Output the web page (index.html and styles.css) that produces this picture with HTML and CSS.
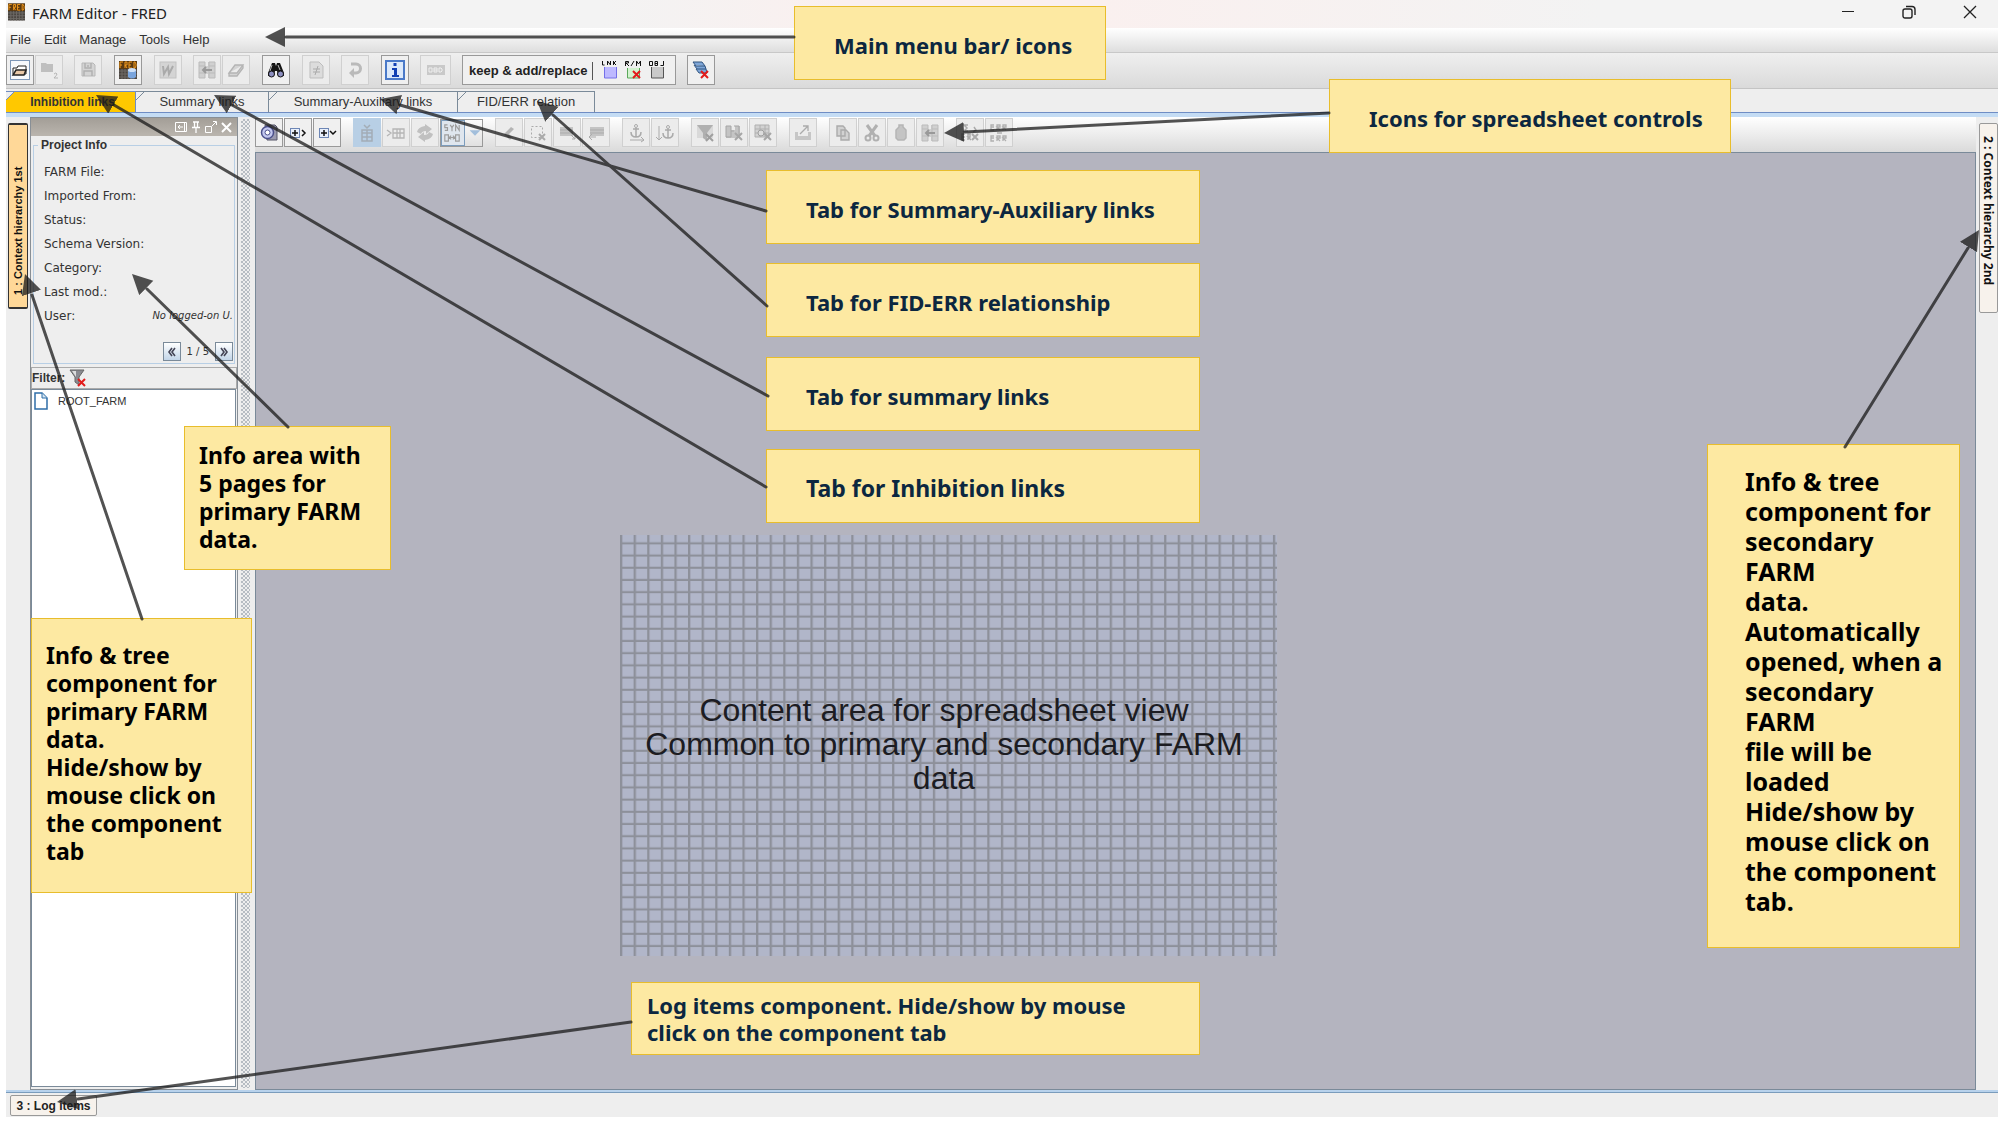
FILE: index.html
```html
<!DOCTYPE html>
<html lang="en">
<head>
<meta charset="utf-8">
<title>FARM Editor - FRED</title>
<link rel="stylesheet" href="styles.css">
</head>
<body>
<svg class="defs" aria-hidden="true">
  <defs>
    <symbol id="i-fred" viewBox="0 0 18 18"><rect width="18" height="18" fill="#4a4540"/><path d="M0 10h18M0 13h18M0 16h18M3 8v10M6 8v10M9 8v10M12 8v10M15 8v10" stroke="#6e6a66"/><rect width="18" height="8" fill="#5c3a10"/><path d="M1 7V1h3M1 4h2M6 7V1h2v3H6l2 3M13 1h-3v6h3M10 4h2M15 1v6h1l1-2V3l-1-2z" stroke="#f39a1d" fill="none"/></symbol>
    <symbol id="i-merge" viewBox="0 0 18 18"><path d="M1 1h6v4h3V1h7v16h-7v-4H7v4H1z" fill="#d0d0d0"/><path d="M1 1h6v16H1zM11 1h6v16h-6zM1 5h6M1 12h6M11 5h6M11 12h6" stroke="#bbb" fill="none"/><path d="M14 9H5M8 6L5 9l3 3" stroke="#999" stroke-width="2" fill="none"/></symbol>
    <symbol id="i-anchor" viewBox="0 0 12 14"><circle cx="6" cy="2" r="1.5" fill="none" stroke="#aaa"/><path d="M6 4v9M3 5h6M1 8q0 5 5 5t5-5" stroke="#aaa" stroke-width="1.5" fill="none"/></symbol>
  </defs>
</svg>

<div class="window">
  <header class="titlebar">
    <svg class="app-icon"><use href="#i-fred"/></svg>
    <h1 class="title">FARM Editor - FRED</h1>
    <div class="window-controls">
      <button type="button" aria-label="Minimize"><svg width="14" height="14"><path d="M1 6.5h12" stroke="#222"/></svg></button>
      <button type="button" aria-label="Restore"><svg width="14" height="14" fill="none" stroke="#222" stroke-width="1.4"><rect x="1" y="4" width="9" height="9" rx="2"/><path d="M4 1.5h6q3 0 3 3V10"/></svg></button>
      <button type="button" aria-label="Close"><svg width="14" height="14"><path d="M1 1l12 12M13 1L1 13" stroke="#222" stroke-width="1.3"/></svg></button>
    </div>
  </header>

  <nav class="menubar" aria-label="Main menu">
    <button type="button">File</button>
    <button type="button">Edit</button>
    <button type="button">Manage</button>
    <button type="button">Tools</button>
    <button type="button">Help</button>
  </nav>

  <div class="toolbar toolbar-main" role="toolbar" aria-label="Main tools">
    <div class="group">
      <button type="button" class="tool on" aria-label="Open"><svg viewBox="0 0 20 20"><rect x=".5" y=".5" width="19" height="19" fill="#f6f9fd" stroke="#7d97b8"/><path d="M3 14V8h4l1-2h8v8z" fill="#fff" stroke="#222"/><path d="M3 15l3-5h10l-2 5z" fill="#e8c8a8" stroke="#222" stroke-width="1.5"/></svg></button>
      <button type="button" class="tool" aria-label="Open second"><svg viewBox="0 0 20 20"><path d="M2 3h5l1 1h6v8H2z" fill="#bfbfbf"/><path d="M15 14q2-2 3 0 0 1-3 4h4" stroke="#b5b5b5" fill="none"/></svg></button>
    </div>
    <span class="sep narrow"></span>
    <button type="button" class="tool" aria-label="Save"><svg viewBox="0 0 20 20"><path d="M4 3h11l2 2v11H4z" fill="#d4d4d4" stroke="#b8b8b8"/><path d="M7 3v5h6V3M6 16v-5h8v5M10 5v2" stroke="#b0b0b0" fill="none" stroke-width="1.4"/></svg></button>
    <span class="sep"></span>
    <button type="button" class="tool on" aria-label="FRED database"><svg viewBox="0 0 20 20"><use href="#i-fred" x="1" y="1" width="18" height="18"/><path d="M10 10v7q4 3 8 0v-7z" fill="#7aa5dd"/><ellipse cx="14" cy="10" rx="4" ry="2" fill="#cfe1f7"/></svg></button>
    <span class="sep"></span>
    <button type="button" class="tool" aria-label="Word export"><svg viewBox="0 0 20 20"><rect x="2" y="2" width="16" height="16" fill="#d4d4d4" stroke="#c2c2c2"/><path d="M5 6l1 8 4-7 1 7 4-8" stroke="#aaa" stroke-width="2" fill="none"/></svg></button>
    <span class="sep narrow"></span>
    <div class="group">
      <button type="button" class="tool" aria-label="Merge"><svg viewBox="0 0 20 20"><use href="#i-merge" x="1" y="1" width="18" height="18"/></svg></button>
      <button type="button" class="tool" aria-label="Erase"><svg viewBox="0 0 20 20"><path d="M3 13l6-8h8l-6 8zM3 13v3h8l6-8V5" fill="#d4d4d4" stroke="#b4b4b4" stroke-width="1.3"/></svg></button>
    </div>
    <span class="sep"></span>
    <button type="button" class="tool on" aria-label="Find"><svg viewBox="0 0 20 20"><path d="M6 3h3l1 3 1-3h3l4 10v3h-6l-1-5H9l-1 5H2v-3z" fill="#151515"/><circle cx="5.500" cy="14" r="3" fill="#8d8fc0" stroke="#111"/><circle cx="14.500" cy="14" r="3" fill="#8d8fc0" stroke="#111"/><path d="M6 5l-2 6M12 5l2 5" stroke="#bbb"/></svg></button>
    <span class="sep"></span>
    <button type="button" class="tool" aria-label="Compare"><svg viewBox="0 0 20 20"><path d="M4 2h9l4 4v12H4z" fill="#dcdcdc" stroke="#bdbdbd"/><path d="M7 9h7M7 12h7M12 6l-3 9" stroke="#aaa"/></svg></button>
    <span class="sep narrow"></span>
    <button type="button" class="tool" aria-label="Undo"><svg viewBox="0 0 20 20"><path d="M6 4h5a4 4 0 0 1 0 9H8" stroke="#bababa" stroke-width="3" fill="none"/><path d="M9 8l-5 5 5 5z" fill="#bababa"/></svg></button>
    <span class="sep"></span>
    <button type="button" class="tool on" aria-label="Information"><svg viewBox="0 0 20 20"><rect x="1" y="1" width="18" height="18" fill="#dce9fa" stroke="#4a79c8" stroke-width="2"/><path d="M8.500 3h3v3h-3zM7 8h5v7h2v2H7v-2h2v-5H7z" fill="#1240b4"/></svg></button>
    <span class="sep narrow"></span>
    <button type="button" class="tool wide" aria-label="OBD"><svg viewBox="0 0 20 20"><rect x="1" y="5" width="18" height="10" fill="#c9c9c9"/><path d="M3 8h3v4H3zM8 8h3v4H8zM8 10h3M13 8h2l1 1v2l-1 1h-2z" stroke="#efefef" fill="none"/></svg></button>
    <span class="sep narrow"></span>
    <div class="mode">
      <button type="button" class="mode-label">keep &amp; add/replace</button>
      <button type="button" class="mode-icon" aria-label="LNK"><svg viewBox="0 0 16 20"><path d="M1.500 1v4h2M6.500 5V1l3 4V1M12.500 1v4M15 1l-2 2 2 2" stroke="#111" fill="none"/><path d="M3.500 7v11h12V7" fill="#bdb9ff" stroke="#7470e8"/></svg></button>
      <button type="button" class="mode-icon" aria-label="R/M"><svg viewBox="0 0 16 20"><path d="M.5 6V1.500h3V3H1l3 3M6 6l3-5M11.500 6V1l2 3 2-3v5" stroke="#111" fill="none"/><path d="M2.500 8v10h12V8" fill="#d3f3cf" stroke="#5aa85a"/><path d="M8 11l7 7M15 11l-7 7" stroke="#e21b1b" stroke-width="2"/></svg></button>
      <button type="button" class="mode-icon" aria-label="OBJ"><svg viewBox="0 0 16 20"><path d="M.5 1.500h3v4h-3zM6 1.500h2.500v4H6zM6 3.500h3M14.500 1v4.500h-3" stroke="#111" fill="none"/><path d="M2.500 7v11h12V7" fill="#c9c9c9" stroke="#555"/></svg></button>
    </div>
    <span class="sep narrow"></span>
    <button type="button" class="tool on" aria-label="Clear layers"><svg viewBox="0 0 20 20"><path d="M2 2h9l3 4H5zM3 5l3 4h9l-1-3M5 9l3 4h8l-1-4" fill="#7ea6d8" stroke="#31547f"/><path d="M10 11l7 7M17 11l-7 7" stroke="#e21b1b" stroke-width="2"/></svg></button>
  </div>

  <div class="tabs" role="tablist">
    <button type="button" role="tab" class="tab active" aria-selected="true">Inhibition links</button>
    <button type="button" role="tab" class="tab tab-m">Summary links</button>
    <button type="button" role="tab" class="tab tab-l">Summary-Auxiliary links</button>
    <button type="button" role="tab" class="tab tab-s">FID/ERR relation</button>
  </div>

  <main class="workspace">
    <div class="strip strip-left"><button type="button" class="side-tab first">1 : Context hierarchy 1st</button></div>

    <aside class="panel">
      <div class="panel-head">
        <button type="button" aria-label="Dock"><svg width="12" height="12"><path d="M.5 1.500h11v9H.5zM9.500 2v8M8 6H3M5 4L3 6l2 2" stroke="#fff" fill="none"/></svg></button>
        <button type="button" aria-label="Pin"><svg width="12" height="12"><path d="M3 1h6M4.500 1v5M7.500 1v5M2 6.500h8M6 7v5" stroke="#fff" stroke-width="1.300" fill="none"/></svg></button>
        <button type="button" aria-label="Float"><svg width="12" height="12"><path d="M.5 5.500h6v6h-6zM7 5l4-4M8 .5h3.500V4" stroke="#fff" fill="none"/></svg></button>
        <button type="button" aria-label="Close"><svg width="12" height="12"><path d="M2 2l9 9M11 2l-9 9" stroke="#fff" stroke-width="2"/></svg></button>
      </div>
      <fieldset class="info">
        <legend>Project Info</legend>
        <dl>
          <div><dt>FARM File:</dt><dd></dd></div>
          <div><dt>Imported From:</dt><dd></dd></div>
          <div><dt>Status:</dt><dd></dd></div>
          <div><dt>Schema Version:</dt><dd></dd></div>
          <div><dt>Category:</dt><dd></dd></div>
          <div><dt>Last mod.:</dt><dd></dd></div>
          <div><dt>User:</dt><dd>No logged-on U.</dd></div>
        </dl>
        <div class="pager">
          <button type="button" aria-label="Previous page"><svg width="10" height="10"><path d="M5 1L2 5l3 4M8 1L5 5l3 4" stroke="#445" stroke-width="1.600" fill="none"/></svg></button>
          <span>1 / 5</span>
          <button type="button" aria-label="Next page"><svg width="10" height="10"><path d="M2 1l3 4-3 4M5 1l3 4-3 4" stroke="#445" stroke-width="1.600" fill="none"/></svg></button>
        </div>
      </fieldset>
      <div class="filter">
        <span>Filter:</span>
        <button type="button" aria-label="Clear filter"><svg width="17" height="18"><path d="M1 1h14l-5 7v8l-4-3V8z" fill="#8a8a90" stroke="#666"/><path d="M3 2h4v6z" fill="#ddd"/><path d="M9 10l7 7M16 10l-7 7" stroke="#e21b1b" stroke-width="2"/></svg></button>
      </div>
      <ul class="tree">
        <li><svg width="14" height="18"><path d="M1 1h7l5 5v11H1z" fill="#fff" stroke="#2f6ea8" stroke-width="1.500"/><path d="M8 1v5h5" fill="#d5e5f2" stroke="#2f6ea8"/></svg>ROOT_FARM</li>
      </ul>
    </aside>

    <div class="splitter"></div>

    <section class="editor">
      <div class="toolbar toolbar-sheet" role="toolbar" aria-label="Spreadsheet controls">
        <div class="group">
          <button type="button" class="tool on" aria-label="Settings"><svg viewBox="0 0 20 20"><path d="M6 2h10l2 2v13H8z" fill="#9a9ab0" stroke="#556"/><circle cx="8.500" cy="9.500" r="6" fill="#c3c8f0" stroke="#4a4f8a" stroke-width="1.500"/><circle cx="8.500" cy="9.500" r="2.500" fill="#fff" stroke="#4a4f8a"/></svg></button>
          <button type="button" class="tool on" aria-label="Expand columns"><svg viewBox="0 0 20 20"><rect x="2.500" y="5.500" width="9" height="9" fill="#e8effa" stroke="#6d86b5"/><path d="M4 10h6M7 7v6M14 7l3 3-3 3" stroke="#111" stroke-width="1.500" fill="none"/></svg></button>
          <button type="button" class="tool on" aria-label="Expand rows"><svg viewBox="0 0 20 20"><rect x="2.500" y="5.500" width="9" height="9" fill="#e8effa" stroke="#6d86b5"/><path d="M4 10h6M7 7v6M13 8l3 3 3-3" stroke="#111" stroke-width="1.500" fill="none"/></svg></button>
        </div>
        <span class="sep"></span>
        <div class="group">
          <button type="button" class="tool selected" aria-label="Column mode"><svg viewBox="0 0 20 20"><path d="M5 7h10v11H5zM5 10h10M5 14h10M10 7v11M7 2l3 3 3-3" stroke="#a3adb6" stroke-width="1.500" fill="none"/></svg></button>
          <button type="button" class="tool" aria-label="Row mode"><svg viewBox="0 0 20 20"><path d="M7 6h11v9H7zM7 10h11M11 6v9M14 6v9M1 7l4 3-4 3" stroke="#b5b5b5" stroke-width="1.300" fill="none"/></svg></button>
          <button type="button" class="tool" aria-label="Refresh"><svg viewBox="0 0 20 20"><path d="M10 3V1l7 5-6 5V8Q7 8 6 11L2 9q1-5 8-6zM10 17v2l-7-5 6-5v3q4 0 5-3l4 2q-1 5-8 6z" fill="#c0c0c0"/></svg></button>
          <span class="sync">
            <button type="button" aria-label="Synchronize"><svg viewBox="0 0 20 24"><path d="M5 3H2v3h3v3H2M8 3l2 3 2-3M10 6v4M14 10V3l4 6V3M2 14h4v7H2zM14 14h4v7h-4zM7 17h6M9 15l-2 2 2 2M11 15l2 2-2 2" stroke="#9d9d9d" stroke-width="1.300" fill="none"/></svg></button>
            <button type="button" aria-label="Synchronize options"><svg viewBox="0 0 20 24"><path d="M4 9h12l-6 6z" fill="#a2bedb"/></svg></button>
          </span>
        </div>
        <span class="sep"></span>
        <div class="group">
          <button type="button" class="tool" aria-label="Edit"><svg viewBox="0 0 20 20"><path d="M5 11l7-7 3 2-5 5 3 3-2 3z" fill="#b4b4b4"/></svg></button>
          <button type="button" class="tool" aria-label="Clear selection"><svg viewBox="0 0 20 20"><rect x="3.500" y="3.500" width="11" height="11" fill="none" stroke="#aaa" stroke-dasharray="2 2"/><path d="M11 11l6 6M17 11l-6 6" stroke="#aaa" stroke-width="2"/></svg></button>
          <button type="button" class="tool" aria-label="Insert row"><svg viewBox="0 0 20 20"><path d="M3 4h13v9H3z" fill="#c4c4c4"/><path d="M3 7h13M3 10h13M14 12l4 4M18 13v3h-3" stroke="#ababab" fill="none"/></svg></button>
          <button type="button" class="tool" aria-label="Remove row"><svg viewBox="0 0 20 20"><path d="M4 4h14v9H4z" fill="#c4c4c4"/><path d="M4 7h14M4 10h14M10 14H3M6 11l-3 3 3 3" stroke="#ababab" fill="none"/></svg></button>
        </div>
        <span class="sep"></span>
        <div class="group">
          <button type="button" class="tool" aria-label="Anchor column"><svg viewBox="0 0 20 20"><use href="#i-anchor" x="4" y="1" width="12" height="14"/><path d="M4 17h14M15 14l3 3-3 2" stroke="#aaa" fill="none"/></svg></button>
          <button type="button" class="tool" aria-label="Anchor row"><svg viewBox="0 0 20 20"><use href="#i-anchor" x="7" y="2" width="12" height="14"/><path d="M4 3v14M1 14l3 3 3-3" stroke="#aaa" fill="none"/></svg></button>
        </div>
        <span class="sep"></span>
        <div class="group">
          <button type="button" class="tool" aria-label="Clear filter"><svg viewBox="0 0 20 20"><path d="M2 2h16v13H2z" fill="#d9d9d9"/><path d="M2 2h16l-6 8v8l-4-3v-5z" fill="#b0b0b0"/><path d="M11 11l7 7M18 11l-7 7" stroke="#9f9f9f" stroke-width="2"/></svg></button>
          <button type="button" class="tool" aria-label="Clear search"><svg viewBox="0 0 20 20"><path d="M2 3h5v4h4V3h5v12H2z" fill="#c4c4c4"/><path d="M2 3h5v11H2zM10 3h5v9M7 8h3" stroke="#a6a6a6" fill="none"/><path d="M11 10l7 7M18 10l-7 7" stroke="#a6a6a6" stroke-width="2"/></svg></button>
          <button type="button" class="tool" aria-label="Clear grid search"><svg viewBox="0 0 20 20"><path d="M2 2h14v12H2zM2 6h14M2 10h14M7 2v12M12 2v12" fill="#d2d2d2" stroke="#b0b0b0"/><circle cx="8" cy="10" r="3" fill="#ddd" stroke="#a0a0a0"/><path d="M11 10l7 7M18 10l-7 7" stroke="#a6a6a6" stroke-width="2"/></svg></button>
        </div>
        <span class="sep"></span>
        <button type="button" class="tool" aria-label="Export"><svg viewBox="0 0 20 20"><path d="M2 9h3v4h10V9h3v8H2z" fill="#c6c6c6"/><path d="M7 11l8-8M10 3h5v5" stroke="#ababab" stroke-width="1.300" fill="none"/></svg></button>
        <span class="sep"></span>
        <div class="group">
          <button type="button" class="tool" aria-label="Copy"><svg viewBox="0 0 20 20"><path d="M4 3h6l2 2v8H4zM8 7h5l3 3v7H8z" fill="#d2d2d2" stroke="#ababab" stroke-width="1.400"/></svg></button>
          <button type="button" class="tool" aria-label="Cut"><svg viewBox="0 0 20 20"><path d="M5 2l8 11M15 2L7 13" stroke="#b0b0b0" stroke-width="3"/><circle cx="6" cy="15" r="2.500" fill="none" stroke="#b0b0b0" stroke-width="2"/><circle cx="14" cy="15" r="2.500" fill="none" stroke="#b0b0b0" stroke-width="2"/></svg></button>
          <button type="button" class="tool" aria-label="Paste"><svg viewBox="0 0 20 20"><path d="M8 2h4v2l3 3v8l-2 2H7l-2-2V7l3-3z" fill="#c4c4c4" stroke="#b5b5b5" stroke-width="1.500"/></svg></button>
          <button type="button" class="tool" aria-label="Merge rows"><svg viewBox="0 0 20 20"><use href="#i-merge" x="1" y="1" width="18" height="18"/></svg></button>
        </div>
        <span class="sep"></span>
        <div class="group">
          <button type="button" class="tool" aria-label="Clear errors"><svg viewBox="0 0 20 20"><path d="M8 2H4l3 3-3 3h4M14 4l2 3-3 2M5 11H2v6h3M2 14h3M8 17v-6h2v3H8l3 3" stroke="#aaa" stroke-width="1.500" fill="none"/><path d="M12 11l6 6M18 11l-6 6" stroke="#aaa" stroke-width="2"/></svg></button>
          <button type="button" class="tool" aria-label="Errors"><svg viewBox="0 0 20 20"><path d="M5 2H2v5h3M2 4h3M8 7V2h3v2H8l3 3M14 7V2h3v2h-3l3 3M5 13H2v5h3M2 15h3M8 18v-5h3v2H8l3 3M14 18v-5h3v2h-3l3 3M8 10h5" stroke="#b0b0b0" stroke-width="1.300" fill="none"/></svg></button>
        </div>
      </div>
      <div class="sheet"></div>
    </section>

    <div class="strip strip-right"><button type="button" class="side-tab second">2 : Context hierarchy 2nd</button></div>
  </main>

  <footer class="statusbar"><button type="button" class="log-tab">3 : Log items</button></footer>
</div>

<div class="notes">
  <div class="content-area">
    <svg viewBox="0 0 483 345" preserveAspectRatio="none" aria-hidden="true">
      <defs><pattern id="mesh" width="10" height="10" patternUnits="userSpaceOnUse"><path d="M0 0h1.700v10H0zM0 6h10v1.700H0z" fill="#85878f" opacity=".8"/></pattern></defs>
      <rect width="483" height="345" fill="#b1b6c9"/><rect width="483" height="345" fill="url(#mesh)"/>
    </svg>
    <p>Content area for spreadsheet view<br>Common to primary and secondary FARM<br>data</p>
  </div>
  <p class="note n-menu">Main menu bar/ icons</p>
  <p class="note n-icons">Icons for spreadsheet controls</p>
  <p class="note n-tab n-aux">Tab for Summary-Auxiliary links</p>
  <p class="note n-tab n-fid">Tab for FID-ERR relationship</p>
  <p class="note n-tab n-sum">Tab for summary links</p>
  <p class="note n-tab n-inh">Tab for Inhibition links</p>
  <p class="note n-info">Info area with<br>5 pages for<br>primary FARM<br>data.</p>
  <p class="note n-primary">Info &amp; tree<br>component for<br>primary FARM<br>data.<br>Hide/show by<br>mouse click on<br>the component<br>tab</p>
  <p class="note n-secondary">Info &amp; tree<br>component for<br>secondary<br>FARM<br>data.<br>Automatically<br>opened, when a<br>secondary<br>FARM<br>file will be<br>loaded<br>Hide/show by<br>mouse click on<br>the component<br>tab.</p>
  <p class="note n-log">Log items component. Hide/show by mouse<br>click on the component tab</p>
  <svg class="arrows" aria-hidden="true">
    <defs><marker id="head" markerUnits="userSpaceOnUse" markerWidth="22" markerHeight="22" refX="20" refY="10" orient="auto"><path d="M0 0l20 10L0 20z" fill="#1c1c1c"/></marker></defs>
    <g stroke="#1c1c1c" stroke-width="3" opacity=".76" fill="none" stroke-linecap="round">
      <path d="M794 37H286"/><path d="M1329 113L965 132"/><path d="M766 211L400 105"/><path d="M767 306L553 115"/>
      <path d="M768 396L232 105"/><path d="M766 487L114 105"/><path d="M288 427L147 289"/><path d="M142 619L32 295"/>
      <path d="M1845 447L1968 248"/><path d="M631 1022L78 1099"/>
    </g>
    <g opacity=".76" fill="none">
      <path d="M285 37H265" marker-end="url(#head)"/><path d="M1330 113L944 133" marker-end="url(#head)"/><path d="M767 211L380 99" marker-end="url(#head)"/>
      <path d="M768 306L537 101" marker-end="url(#head)"/><path d="M769 396L214 95" marker-end="url(#head)"/><path d="M767 487L96 95" marker-end="url(#head)"/>
      <path d="M289 428L132 274" marker-end="url(#head)"/><path d="M142 620L25 274" marker-end="url(#head)"/><path d="M1845 447L1979 230" marker-end="url(#head)"/>
      <path d="M632 1022L57 1102" marker-end="url(#head)"/>
    </g>
  </svg>
</div>
</body>
</html>
```
FILE: styles.css
```css
* { box-sizing: border-box; }
body { margin: 0; background: #fff; font-family: "Liberation Sans", Arial, sans-serif; font-size: 13px; color: #333; position: relative; }
button { margin: 0; padding: 0; border: 0; background: none; font: inherit; color: inherit; }
svg { display: block; }
.defs { position: absolute; width: 0; height: 0; }

.window { display: flex; flex-direction: column; min-height: calc(100vh - 7px); margin: 0 4px 0 6px; background: #eee; }

.titlebar { display: flex; align-items: center; height: 28px; padding-left: 2px; background: linear-gradient(90deg, #f3f3f3 30%, #faf0ef 42%, #faf0ef 55%, #f3f3f3 80%); }
.app-icon { width: 17px; height: 18px; margin-bottom: 4px; }
.title { margin: 0 0 3px 7px; font: 400 15px/22px "Noto Sans", sans-serif; color: #222; }
.window-controls { display: flex; gap: 47px; margin: 0 21px 4px auto; }

.menubar { display: flex; gap: 13px; height: 25px; padding: 0 4px; background: linear-gradient(#fff, #dedede); border-bottom: 1px solid #c8c8c8; font-size: 13px; line-height: 24px; }

.toolbar { display: flex; align-items: center; }
.toolbar-main { height: 36px; padding-bottom: 2px; background: linear-gradient(#efefef, #dadada); border-bottom: 1px solid #c4c4c4; }
.toolbar-sheet { height: 35px; padding-bottom: 4px; background: linear-gradient(#fff, #dadada); }
.group { display: flex; gap: 1px; }
.sep { width: 12px; }
.sep.narrow { width: 11px; }
.tool { display: grid; place-items: center; width: 28px; height: 30px; border: 1px solid #d0d0d0; background: #ececec; }
.toolbar-sheet .tool { height: 29px; }
.tool svg { width: 20px; height: 20px; }
.tool.on { border-color: #999; background: #f0f0f0; }
.tool.wide { width: 31px; }
.tool.selected { background: #b8cfe5; border-color: #b8cfe5; }
.sync { display: flex; width: 43px; height: 28px; margin-top: 1px; border: 1px solid #999; }
.sync button:first-child { width: 24px; border: 1px solid #7c9cbc; background: #dfe6ee; }
.sync button { padding: 1px; flex: none; }
.sync svg { width: 18px; height: 22px; }
.mode { display: flex; align-items: center; gap: 8px; width: 214px; height: 30px; padding: 0 6px; border: 1px solid #999; background: #f0f0f0; }
.mode-label { padding-right: 4px; margin-top: 3px; border-right: 1px solid #555; font-weight: 700; font-size: 13px; line-height: 18px; color: #222; white-space: nowrap; flex: none; }
.mode-icon svg { width: 16px; height: 20px; }

.tabs { display: flex; align-items: flex-end; height: 28px; border-bottom: 4px solid #c4dcf4; box-shadow: inset 0 -1px #6f8dc4; }
.tab { width: 130px; height: 22px; border: 1px solid #7a8a99; border-bottom-color: #6f8dc4; border-left: 0; font-size: 13px; line-height: 20px; background: linear-gradient(135deg, #eee 5px, #7a8a99 5px, #7a8a99 6px, #eee 6px); }
.tab.active { padding-left: 4px; background: linear-gradient(135deg, #eee 5px, #6f8dc4 5px, #6f8dc4 6px, #ffc800 6px); border-color: #6f8dc4; font-weight: 700; font-size: 12px; }
.tab-m { width: 133px; }
.tab-l { width: 189px; }
.tab-s { width: 137px; }

.workspace { display: flex; flex: 1; }
.strip { padding-top: 6px; }
.strip-left { width: 24px; padding-left: 2px; }
.strip-right { width: 22px; padding-left: 3px; }
.side-tab { writing-mode: vertical-rl; width: 20px; border: 1px solid #333; border-radius: 2px; font-weight: 700; color: #111; text-align: left; white-space: nowrap; }
.side-tab.first { height: 186px; padding-top: 12px; border-width: 2px 1px; background: #ffd898; font-size: 11px; line-height: 18px; transform: rotate(180deg); }
.side-tab.second { width: 19px; height: 190px; padding-top: 12px; border-color: #999; background: #f7f2ec; font: 700 12px/17px "Noto Sans", sans-serif; }

.panel { display: flex; flex-direction: column; width: 208px; border: 1px solid #888f96; }
.panel-head { display: flex; align-items: center; justify-content: flex-end; gap: 3px; height: 18px; padding-right: 5px; background: linear-gradient(#a39e97, #bab5ae); }
.info { margin: 1px 2px 0; padding: 0 1px 1px 8px; border: 1px solid #b8cfe5; min-width: 0; height: 227px; }
.info legend { margin-left: -4px; padding: 0 3px; font-weight: 700; font-size: 12px; line-height: 16px; }
.info dl { margin: 7px 0 0; font: 12px/24px "DejaVu Sans", sans-serif; }
.info dl div { display: flex; justify-content: space-between; padding-left: 2px; height: 24px; }
.info dd { margin: 0; font-size: 10px; font-style: italic; white-space: nowrap; }
.pager { display: flex; align-items: center; justify-content: flex-end; gap: 6px; margin-top: 14px; font: 10px/18px "DejaVu Sans", sans-serif; }
.pager span { white-space: nowrap; }
.pager button { display: grid; place-items: center; width: 18px; height: 19px; border: 1px solid #7a8a99; background: linear-gradient(#fff, #c2d5e8); }
.filter { display: flex; align-items: center; gap: 4px; height: 22px; margin-top: 3px; border: 1px solid #aaa; font-weight: 700; font-size: 12px; }
.tree { flex: 1; margin: 0 1px 2px 0; padding: 2px 0 0 2px; border: 1px solid #7a8a99; background: #fff; list-style: none; font-size: 11px; }
.tree li { display: flex; align-items: center; gap: 10px; height: 18px; }

.splitter { width: 17px; border: 0 solid #eee; border-width: 2px 5px 2px 3px; background: conic-gradient(#b6bcc3 25%, #eee 25% 50%, #b6bcc3 50% 75%, #eee 75%) 0 0 / 4px 4px; }
.editor { display: flex; flex: 1; flex-direction: column; min-width: 0; }
.sheet { flex: 1; border: 1px solid #7a8a99; background: #b4b4bf; }

.statusbar { height: 27px; padding: 3px 4px 0; border-top: 2px solid #b8d2ec; box-shadow: inset 0 1px #7a9cbc; }
.log-tab { width: 87px; height: 21px; border: 1px solid #999; border-radius: 2px; background: #f7f2ec; font-weight: 700; font-size: 12px; color: #222; white-space: nowrap; }

/* Callouts and arrows laid freely over the application window */
.notes { position: absolute; inset: 0; pointer-events: none; }
.arrows { position: absolute; left: 0; top: 0; width: 100%; height: 100%; }
.note { position: absolute; display: flow-root; margin: 0; padding: 25px 39px; border: 1px solid #e8bd2c; background: #fde9a2; color: #0c2740; font: 700 22px/27px "Noto Sans", sans-serif; white-space: nowrap; }
.n-menu { left: 794px; top: 6px; width: 312px; height: 74px; }
.n-icons { left: 1329px; top: 79px; width: 402px; height: 74px; }
.n-tab { left: 766px; width: 434px; height: 74px; }
.n-aux { top: 170px; }
.n-fid { top: 263px; }
.n-sum { top: 357px; }
.n-inh { top: 449px; font-size: 23px; }
.n-info { left: 184px; top: 426px; width: 207px; height: 144px; padding: 14px; color: #000; font-size: 23px; line-height: 28px; }
.n-primary { left: 31px; top: 618px; width: 221px; height: 275px; padding: 22px 14px; color: #000; font-size: 23px; line-height: 28px; }
.n-secondary { left: 1707px; top: 444px; width: 253px; height: 504px; padding: 21px 37px; color: #000; font-size: 25px; line-height: 30px; }
.n-log { left: 631px; top: 982px; width: 569px; height: 73px; padding: 9px 15px; }
.content-area { position: absolute; left: 620px; top: 535px; width: 657px; height: 421px; }
.content-area svg { width: 100%; height: 100%; }
.content-area p { position: absolute; inset: 158px 9px auto 0; margin: 0; font-size: 32px; line-height: 34px; text-align: center; color: #1c1c22; white-space: nowrap; }
```
